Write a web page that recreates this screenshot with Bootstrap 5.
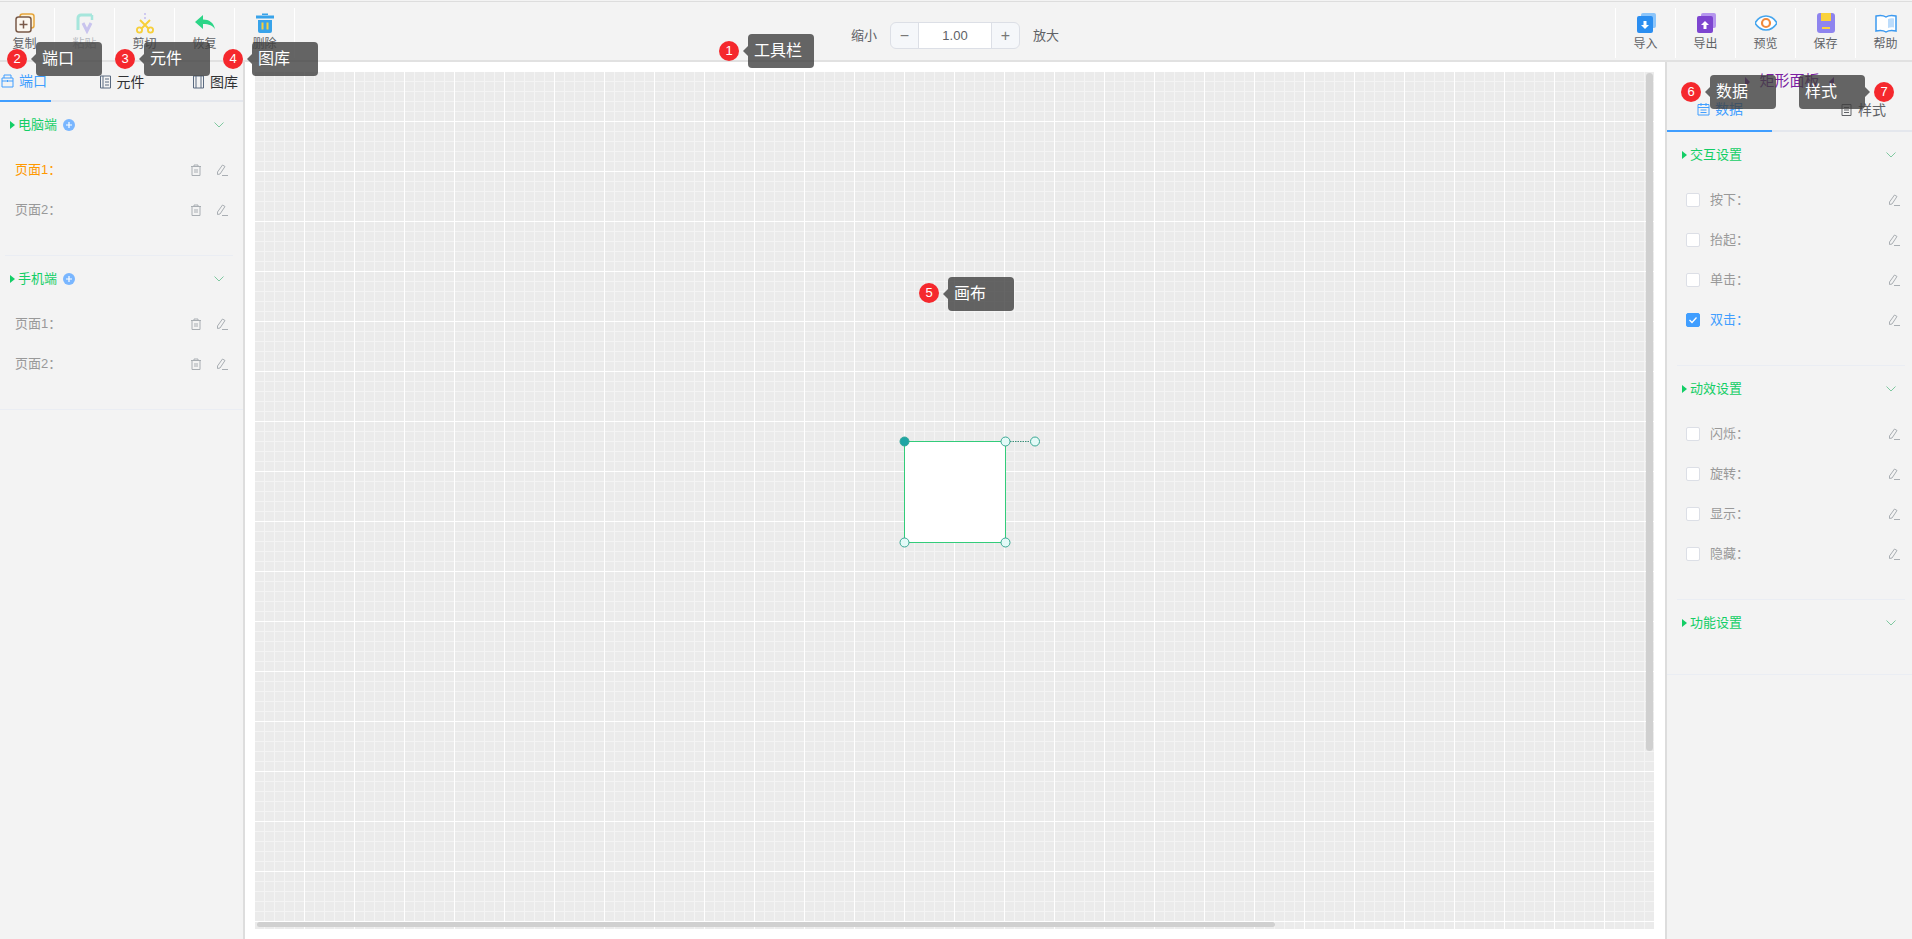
<!DOCTYPE html>
<html lang="zh-CN">
<head>
  <meta charset="UTF-8" />
  <title>组态编辑器</title>
  <link rel="stylesheet" href="https://cdn.jsdelivr.net/npm/bootstrap@5.3.0/dist/css/bootstrap.min.css" />
  <style>
    html, body { height: 100%; overflow: hidden; }
    body { font-family: "Liberation Sans", "Noto Sans CJK SC", sans-serif; font-size: 13px; color: #606266; background: #f3f3f3; }
    .app-shell { height: 939px; border-top: 1px solid #ddd; margin-top: 1px; }

    /* 工具栏 */
    .tool-bar { height: 60px; flex: none; background: #f3f3f3; border-bottom: 2px solid #e1e1e1; }
    .tool-side { flex: 1 1 0; }
    .tool-btn { width: 60px; height: 50px; margin-top: 6px; font-size: 12px; line-height: 16px; border-right: 1px solid #fff; padding-top: 4px; }
    .tool-btn svg { display: block; width: 22px; height: 22px; margin-bottom: 2px; }
    .tool-left { margin-left: -5px; }
    .tool-right { margin-right: -3px; }
    .tool-right .tool-btn { border-right: 0; border-left: 1px solid #fff; }
    .tool-off { color: #b9bcc2; }
    .zoom-wrap { margin-left: -2px; }
    .zoom-box { width: 130px; height: 27px; margin: 0 13px; }
    .zoom-box .input-group-text { width: 29px; height: 27px; padding: 0; justify-content: center; font-size: 16px; color: #777; background: #f5f7fa; border-color: #dcdfe6; }
    .zoom-box .form-control { height: 27px; min-height: 27px; padding: 0; font-size: 13px; text-align: center; color: #606266; border-color: #dcdfe6; }

    /* 左右面板 */
    .work-area { flex: 1 1 auto; min-height: 0; }
    .side-left { width: 245px; flex: none; background: #f3f3f3; border-right: 2px solid #ddd; }
    .side-right { width: 247px; flex: none; background: #f3f3f3; border-left: 2px solid #ddd; }
    .tab-line { height: 40px; font-size: 14px; color: #303133; border-bottom: 2px solid #e4e7ed; padding-right: 5px; }
    .tab-item { height: 40px; gap: 5px; margin-bottom: -2px; }
    .tab-item svg { width: 13px; height: 14px; }
    .tab-on { color: #409eff; border-bottom: 2px solid #409eff; }
    .tab-left-on { width: 51px; padding-left: 1px; }
    .panel-title { height: 30px; padding-top: 9px; font-size: 15px; color: #7b1fa2; gap: 9px; }
    .tri-r, .tri-l { width: 0; height: 0; border-top: 5px solid transparent; border-bottom: 5px solid transparent; }
    .tri-r { border-left: 5px solid #7b1fa2; }
    .tri-l { border-right: 5px solid #7b1fa2; }
    .right-tabs { height: 40px; padding-right: 26px; font-size: 14px; border-bottom: 2px solid #e4e7ed; }
    .right-tabs .tab-item { padding-bottom: 4px; }
    .right-tab-on { width: 105px; padding-left: 30px; }

    .tree-group { padding-bottom: 25px; border-bottom: 1px solid #eaedf3; margin: 0 10px 0 5px; }
    .tree-group-end { margin: 0; padding: 0 10px 25px 5px; }
    .tree-right { margin: 0 7px 0 10px; }
    .tree-right.tree-group-end { margin: 0; padding: 0 7px 26px 10px; }
    .tree-head { height: 46px; margin-bottom: 2px; padding-left: 5px; padding-right: 9px; color: #13ce66; }
    .tree-head .tri-g { width: 0; height: 0; margin-right: 3px; border-top: 4px solid transparent; border-bottom: 4px solid transparent; border-left: 5px solid #13ce66; }
    .tree-head .add-dot { width: 12px; height: 12px; margin-left: 6px; }
    .tree-head .chev { width: 10px; height: 6px; }
    .tree-row { height: 40px; padding: 0 5px 0 10px; color: #999; }
    .tree-row svg { width: 12px; height: 12px; }
    .row-on { color: #ff9900; }
    .row-blue { color: #409eff; }
    .tree-right .tree-row { padding: 0 5px 0 9px; }
    .row-check { width: 14px; height: 14px; margin-right: 10px; border: 1px solid #dcdfe6; border-radius: 2px; background: #fff; }
    .row-check-on { background: #409eff; border-color: #409eff; }
    .row-check svg { width: 10px; height: 10px; }
    .tree-head-tail { margin-left: auto; }
    .trash-gap { margin-right: 14px; }

    /* 画布 */
    .canvas-wrap { padding: 10px 11px 10px 10px; background: #fff; min-width: 0; }
    .canvas-grid {
      height: 857px; background-color: #ebebeb; overflow: hidden;
      background-image:
        linear-gradient(to right, transparent 49px, #fff 49px),
        linear-gradient(to bottom, transparent 49px, #fff 49px),
        linear-gradient(to right, transparent 9px, #f4f4f4 9px),
        linear-gradient(to bottom, transparent 9px, #f4f4f4 9px);
      background-size: 50px 50px, 50px 50px, 10px 10px, 10px 10px;
    }
    .shape-box { position: absolute; left: 644px; top: 364px; width: 150px; height: 120px; }
    .scroll-y { position: absolute; right: 1px; top: 1px; width: 7px; height: 678px; border-radius: 4px; background: #d0d0d0; }
    .scroll-x { position: absolute; left: 2px; bottom: 2px; width: 1018px; height: 5px; border-radius: 3px; background: #d0d0d0; }

    /* 引导提示 */
    .guide-tip { position: absolute; width: 66px; height: 34px; padding-left: 6px; border-radius: 4px; font-size: 16px; line-height: 34px; color: #fff; background: rgba(64, 64, 64, .8); }
    .guide-tip::before { content: ""; position: absolute; left: -5px; top: 12px; border-top: 5px solid transparent; border-bottom: 5px solid transparent; border-right: 5px solid rgba(64, 64, 64, .8); }
    .tip-flip { text-align: left; }
    .tip-flip::before { left: auto; right: -5px; border-right: 0; border-left: 5px solid rgba(64, 64, 64, .8); }
    .guide-num { position: absolute; width: 20px; height: 20px; border-radius: 50%; font-size: 13px; line-height: 20px; text-align: center; color: #fff; background: #f5282d; }
    .tip-1 { left: 748px; top: 32px; } .num-1 { left: 719px; top: 39px; }
    .tip-2 { left: 36px; top: 40px; } .num-2 { left: 7px; top: 47px; }
    .tip-3 { left: 144px; top: 40px; } .num-3 { left: 115px; top: 47px; }
    .tip-4 { left: 252px; top: 40px; } .num-4 { left: 223px; top: 47px; }
    .tip-5 { left: 948px; top: 275px; } .num-5 { left: 919px; top: 281px; }
    .tip-6 { left: 1710px; top: 73px; } .num-6 { left: 1681px; top: 80px; }
    .tip-7 { left: 1799px; top: 73px; } .num-7 { left: 1874px; top: 80px; }
  </style>
</head>
<body>

<!-- 小图标 -->
<svg class="d-none">
  <symbol id="i-trash" viewBox="0 0 12 12"><path d="M1 2.500h10M4 2.500V1h4v1.500M2 2.500V11.500h8V2.500M5 5v4M7 5v4" fill="none" stroke="#a9aeb3" stroke-width="1"/></symbol>
  <symbol id="i-pen" viewBox="0 0 12 12"><path d="M1.500 8 6.500 1 9 2.500 4 10 1.500 10.500ZM6 11.500h6" fill="none" stroke="#a9aeb3" stroke-width="1"/></symbol>
  <symbol id="i-chev" viewBox="0 0 10 6"><path d="M.5.500 5 5 9.500.500" fill="none" stroke="#7fc8a0" stroke-width="1"/></symbol>
  <symbol id="i-add" viewBox="0 0 12 12"><circle cx="6" cy="6" r="6" fill="#79b6ff"/><path d="M3 6h6M6 3v6" stroke="#fff" stroke-width="1.200"/></symbol>
  <symbol id="i-check" viewBox="0 0 10 10"><path d="M1.500 5 4 7.500 8.500 2.500" fill="none" stroke="#fff" stroke-width="1.300"/></symbol>
</svg>

<div class="app-shell d-flex flex-column position-relative">
  <!-- 工具栏 -->
  <div class="tool-bar d-flex align-items-start">
    <div class="tool-side d-flex">
      <div class="tool-left d-flex">
        <div class="tool-btn d-flex flex-column align-items-center">
          <svg viewBox="0 0 22 22"><rect x="6" y="2" width="14" height="14" rx="2.500" fill="#fff3d6" stroke="#e6a53c" stroke-width="1.500"/><rect x="2" y="5" width="15" height="15" rx="2.500" fill="#fbf7f0" stroke="#7a5a48" stroke-width="1.500"/><path d="M5.500 12.500h8M9.500 8.500v8" stroke="#7a5a48" stroke-width="1.500"/></svg>
          复制
        </div>
        <div class="tool-btn tool-off d-flex flex-column align-items-center">
          <svg viewBox="0 0 22 22"><path d="M18 3H7a3 3 0 0 0-3 3v12" fill="none" stroke="#a6e6dc" stroke-width="3"/><path d="M18 3v5" stroke="#a6e6dc" stroke-width="2.500"/><path d="M9 11l4 8 4-8" fill="none" stroke="#c9c4ee" stroke-width="3"/></svg>
          粘贴
        </div>
        <div class="tool-btn d-flex flex-column align-items-center">
          <svg viewBox="0 0 22 22"><path d="M11 1v2M11 5v2" stroke="#c4bdf0" stroke-width="1.500"/><path d="M6 8l9 9M16 8l-9 9" stroke="#f7cf3a" stroke-width="2"/><circle cx="5.500" cy="18" r="2.600" fill="none" stroke="#f7cf3a" stroke-width="1.800"/><circle cx="16.500" cy="18" r="2.600" fill="none" stroke="#f7cf3a" stroke-width="1.800"/></svg>
          剪切
        </div>
        <div class="tool-btn d-flex flex-column align-items-center">
          <svg viewBox="0 0 22 22"><path d="M1 10 9 3v4.500c6 0 11 3 12 10-2-4-6-5.500-12-5.500V17Z" fill="#2bd587"/></svg>
          恢复
        </div>
        <div class="tool-btn d-flex flex-column align-items-center">
          <svg viewBox="0 0 22 22"><path d="M8 3V1.500h6V3M2 3.500h18v3H2Z" fill="#38a3ea"/><path d="M4 8h14v11a2 2 0 0 1-2 2H6a2 2 0 0 1-2-2Z" fill="#38a3ea"/><path d="M8.500 10.500v7M13.500 10.500v7" stroke="#f7cf3a" stroke-width="2"/></svg>
          删除
        </div>
      </div>
    </div>

    <div class="zoom-wrap d-flex align-items-center mt-3 pt-1">
      <span>缩小</span>
      <div class="input-group flex-nowrap zoom-box">
        <span class="input-group-text">−</span>
        <input class="form-control" type="text" value="1.00" />
        <span class="input-group-text">+</span>
      </div>
      <span>放大</span>
    </div>

    <div class="tool-side d-flex justify-content-end">
      <div class="tool-right d-flex">
        <div class="tool-btn d-flex flex-column align-items-center">
          <svg viewBox="0 0 22 22"><rect x="6" y="1" width="15" height="15" rx="2" fill="#8cc5fa"/><rect x="2" y="4" width="16" height="17" rx="2" fill="#2b8ef0"/><path d="M8.500 9v4H6l4 4 4-4h-2.500V9Z" fill="#fff"/></svg>
          导入
        </div>
        <div class="tool-btn d-flex flex-column align-items-center">
          <svg viewBox="0 0 22 22"><rect x="6" y="1" width="15" height="15" rx="2" fill="#b596ee"/><rect x="2" y="4" width="16" height="17" rx="2" fill="#7d45d0"/><path d="M8.500 17v-4H6l4-4 4 4h-2.500v4Z" fill="#fff"/></svg>
          导出
        </div>
        <div class="tool-btn d-flex flex-column align-items-center">
          <svg viewBox="0 0 22 22"><path d="M0 11C3 6 7 4 11 4s8 2 11 7c-3 5-7 7-11 7S3 16 0 11Z" fill="#fff" stroke="#45a5ee" stroke-width="1.500"/><circle cx="11" cy="11" r="4" fill="none" stroke="#f08a3c" stroke-width="2.200"/></svg>
          预览
        </div>
        <div class="tool-btn d-flex flex-column align-items-center">
          <svg viewBox="0 0 22 22"><rect x="2" y="1" width="18" height="20" rx="3" fill="#8e84ee"/><rect x="6" y="1" width="10" height="8" fill="#fad23c"/><rect x="7" y="15" width="8" height="2" fill="#fad23c"/></svg>
          保存
        </div>
        <div class="tool-btn d-flex flex-column align-items-center">
          <svg viewBox="0 0 22 22"><path d="M1 4c4-1 7-1 10 1 3-2 6-2 10-1v15c-4-1-7-1-10 1-3-2-6-2-10-1Z" fill="#fff" stroke="#3d9af0" stroke-width="1.500"/><path d="M13 7c2-1 4-1 6-.500v9c-2-.500-4-.500-6 .500Z" fill="#bcdcfb"/></svg>
          帮助
        </div>
      </div>
    </div>
  </div>

  <div class="work-area d-flex">
    <!-- 左侧面板 -->
    <div class="side-left">
      <div class="tab-line d-flex justify-content-between">
        <div class="tab-item tab-on tab-left-on d-flex align-items-center">
          <svg viewBox="0 0 13 14"><path d="M1 4h11v9H1ZM3 4V1h7v3M1 7h11M6.500 6v2" fill="none" stroke="#409eff"/></svg>端口
        </div>
        <div class="tab-item d-flex align-items-center">
          <svg viewBox="0 0 13 14"><path d="M1.500 1h10v12h-10ZM4 1v12M6 4h4M6 7h4M6 10h4" fill="none" stroke="#5a6a80"/></svg>元件
        </div>
        <div class="tab-item d-flex align-items-center">
          <svg viewBox="0 0 13 14"><path d="M1.500 1h10v12h-10ZM4 1v12M9 1v12" fill="none" stroke="#5a6a80"/></svg>图库
        </div>
      </div>

      <div class="tree-group">
        <div class="tree-head d-flex align-items-center">
          <span class="tri-g"></span>电脑端<svg class="add-dot"><use href="#i-add"/></svg>
          <svg class="chev tree-head-tail"><use href="#i-chev"/></svg>
        </div>
        <div class="tree-row row-on d-flex align-items-center justify-content-between">
          <span>页面1：</span>
          <span class="d-flex"><svg class="trash-gap"><use href="#i-trash"/></svg><svg><use href="#i-pen"/></svg></span>
        </div>
        <div class="tree-row d-flex align-items-center justify-content-between">
          <span>页面2：</span>
          <span class="d-flex"><svg class="trash-gap"><use href="#i-trash"/></svg><svg><use href="#i-pen"/></svg></span>
        </div>
      </div>

      <div class="tree-group tree-group-end">
        <div class="tree-head d-flex align-items-center">
          <span class="tri-g"></span>手机端<svg class="add-dot"><use href="#i-add"/></svg>
          <svg class="chev tree-head-tail"><use href="#i-chev"/></svg>
        </div>
        <div class="tree-row d-flex align-items-center justify-content-between">
          <span>页面1：</span>
          <span class="d-flex"><svg class="trash-gap"><use href="#i-trash"/></svg><svg><use href="#i-pen"/></svg></span>
        </div>
        <div class="tree-row d-flex align-items-center justify-content-between">
          <span>页面2：</span>
          <span class="d-flex"><svg class="trash-gap"><use href="#i-trash"/></svg><svg><use href="#i-pen"/></svg></span>
        </div>
      </div>
    </div>

    <!-- 画布 -->
    <div class="canvas-wrap flex-grow-1">
      <div class="canvas-grid position-relative">
        <svg class="shape-box" viewBox="0 0 150 120">
          <rect x="5.500" y="5.500" width="101" height="101" fill="#fff" stroke="#33cc7a"/>
          <path d="M111 5.500h19" stroke="#3a8f78" stroke-dasharray="1.500 1"/>
          <circle cx="5.500" cy="5.500" r="4.500" fill="#1fa5a5" stroke="#35a89a"/>
          <circle cx="106.500" cy="5.500" r="4.500" fill="#e3faf7" stroke="#3aa894"/>
          <circle cx="136" cy="5.500" r="4.500" fill="#e3faf7" stroke="#3aa894"/>
          <circle cx="5.500" cy="106.500" r="4.500" fill="#e3faf7" stroke="#3aa894"/>
          <circle cx="106.500" cy="106.500" r="4.500" fill="#e3faf7" stroke="#3aa894"/>
        </svg>
        <div class="scroll-y"></div>
        <div class="scroll-x"></div>
      </div>
    </div>

    <!-- 右侧面板 -->
    <div class="side-right">
      <div class="panel-title d-flex align-items-center justify-content-center">
        <span class="tri-r"></span>矩形面板<span class="tri-l"></span>
      </div>
      <div class="right-tabs d-flex justify-content-between">
        <div class="tab-item tab-on right-tab-on d-flex align-items-center">
          <svg viewBox="0 0 13 14"><path d="M1 2.500h11v10.500H1ZM1 5.500h11M4 1v3M9 1v3M3.500 8h6M3.500 10.500h6" fill="none" stroke="#409eff"/></svg>数据
        </div>
        <div class="tab-item d-flex align-items-center">
          <svg viewBox="0 0 13 14"><path d="M2 1.500h9v11H2ZM4 4.500h5M4 7h5M4 9.500h5" fill="none" stroke="#606266"/></svg>样式
        </div>
      </div>

      <div class="tree-group tree-right">
        <div class="tree-head d-flex align-items-center">
          <span class="tri-g"></span>交互设置
          <svg class="chev tree-head-tail"><use href="#i-chev"/></svg>
        </div>
        <div class="tree-row d-flex align-items-center"><span class="row-check"></span>按下：<svg class="ms-auto"><use href="#i-pen"/></svg></div>
        <div class="tree-row d-flex align-items-center"><span class="row-check"></span>抬起：<svg class="ms-auto"><use href="#i-pen"/></svg></div>
        <div class="tree-row d-flex align-items-center"><span class="row-check"></span>单击：<svg class="ms-auto"><use href="#i-pen"/></svg></div>
        <div class="tree-row row-blue d-flex align-items-center"><span class="row-check row-check-on d-flex align-items-center justify-content-center"><svg><use href="#i-check"/></svg></span>双击：<svg class="ms-auto"><use href="#i-pen"/></svg></div>
      </div>

      <div class="tree-group tree-right">
        <div class="tree-head d-flex align-items-center">
          <span class="tri-g"></span>动效设置
          <svg class="chev tree-head-tail"><use href="#i-chev"/></svg>
        </div>
        <div class="tree-row d-flex align-items-center"><span class="row-check"></span>闪烁：<svg class="ms-auto"><use href="#i-pen"/></svg></div>
        <div class="tree-row d-flex align-items-center"><span class="row-check"></span>旋转：<svg class="ms-auto"><use href="#i-pen"/></svg></div>
        <div class="tree-row d-flex align-items-center"><span class="row-check"></span>显示：<svg class="ms-auto"><use href="#i-pen"/></svg></div>
        <div class="tree-row d-flex align-items-center"><span class="row-check"></span>隐藏：<svg class="ms-auto"><use href="#i-pen"/></svg></div>
      </div>

      <div class="tree-group tree-right tree-group-end">
        <div class="tree-head d-flex align-items-center">
          <span class="tri-g"></span>功能设置
          <svg class="chev tree-head-tail"><use href="#i-chev"/></svg>
        </div>
      </div>
    </div>
  </div>

  <!-- 引导提示，盖在页面上 -->
  <span class="guide-num num-1">1</span><div class="guide-tip tip-1">工具栏</div>
  <span class="guide-num num-2">2</span><div class="guide-tip tip-2">端口</div>
  <span class="guide-num num-3">3</span><div class="guide-tip tip-3">元件</div>
  <span class="guide-num num-4">4</span><div class="guide-tip tip-4">图库</div>
  <span class="guide-num num-5">5</span><div class="guide-tip tip-5">画布</div>
  <span class="guide-num num-6">6</span><div class="guide-tip tip-6">数据</div>
  <span class="guide-num num-7">7</span><div class="guide-tip tip-7 tip-flip">样式</div>
</div>

<script src="https://cdn.jsdelivr.net/npm/bootstrap@5.3.0/dist/js/bootstrap.bundle.min.js"></script>
</body>
</html>
